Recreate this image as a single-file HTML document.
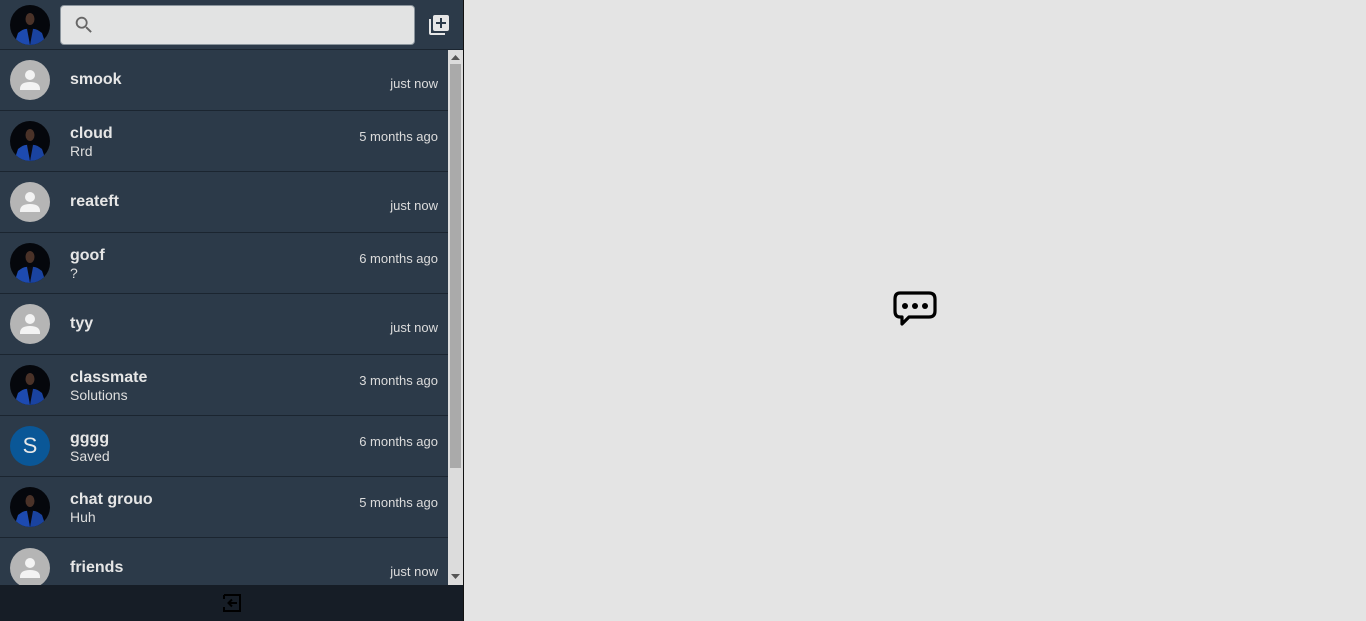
<!DOCTYPE html>
<html><head><meta charset="utf-8"><style>
*{margin:0;padding:0;box-sizing:border-box}
body{width:1366px;height:621px;overflow:hidden;background:#e4e4e4;font-family:"Liberation Sans",sans-serif;position:relative}
.side{position:absolute;left:0;top:0;width:464px;height:621px;background:#2c3a49;border-right:1px solid #111}
.hdr{position:absolute;left:0;top:0;width:463px;height:50px;border-bottom:1px solid #1b2530}
.search{position:absolute;left:60px;top:5px;width:355px;height:40px;background:#e2e3e3;border:1px solid #8a949c;border-radius:4px}
.list{position:absolute;left:0;top:50px;width:448px;height:535px;overflow:hidden}
.row{position:relative;height:61px;border-bottom:1px solid #1b2530}
.av{position:absolute;left:10px;top:10px;width:40px;height:40px;border-radius:50%;overflow:hidden}
.name{position:absolute;left:70px;font-weight:bold;font-size:16px;color:#e6e6e6}
.sub{position:absolute;left:70px;top:32px;font-size:14px;color:#dedede}
.time{position:absolute;right:10px;font-size:13px;color:#dcdcdc}
.sb{position:absolute;left:448px;top:50px;width:15px;height:535px;background:#dcdcdc}
.thumb{position:absolute;left:2px;top:14px;width:11px;height:404px;background:#aaa}
.foot{position:absolute;left:0;top:585px;width:463px;height:36px;background:#161d26}
</style></head><body>
<svg width="0" height="0" style="position:absolute"><defs>
<symbol id="ph" viewBox="0 0 40 40"><rect width="40" height="40" fill="#05070c"/><ellipse cx="20" cy="14" rx="4.5" ry="6" fill="#4a3228"/><path d="M4 40 L8 28 Q14 23 18 24 L20 40 Z" fill="#1d4ab0"/><path d="M36 40 L32 28 Q26 23 22 24 L20 40 Z" fill="#1a43a0"/><path d="M17 24 L20 40 L23 24 Z" fill="#0a0a10"/></symbol>
<symbol id="df" viewBox="0 0 40 40"><rect width="40" height="40" fill="#b5b5b5"/><circle cx="20" cy="15" r="5" fill="#f3f3f3"/><path d="M10 29 Q10 22 20 22 Q30 22 30 29 L30 30 L10 30 Z" fill="#f3f3f3"/></symbol>
</defs></svg>
<div class="side">
<div class="hdr">
<div class="av" style="top:5px"><svg width="40" height="40"><use href="#ph"/></svg></div>
<div class="search"><svg style="position:absolute;left:12px;top:8px" width="22" height="22" viewBox="0 0 24 24"><path d="M15.5 14h-.8l-.3-.3A6.5 6.5 0 1 0 9.5 16a6.5 6.5 0 0 0 4.2-1.6l.3.3v.8l5 5 1.5-1.5-5-5zm-6 0A4.5 4.5 0 1 1 14 9.5 4.5 4.5 0 0 1 9.5 14z" fill="#666"/></svg></div>
<svg style="position:absolute;left:427px;top:13px" width="24" height="24" viewBox="0 0 24 24"><path d="M4 6H2v14a2 2 0 0 0 2 2h14v-2H4V6zm16-4H8a2 2 0 0 0-2 2v12a2 2 0 0 0 2 2h12a2 2 0 0 0 2-2V4a2 2 0 0 0-2-2zm-1 9h-4v4h-2v-4H9V9h4V5h2v4h4v2z" fill="#e6e6e6"/></svg>
</div>
<div class="list">
<div class="row"><div class="av"><svg width="40" height="40"><use href="#df"/></svg></div><div class="name" style="top:21px">smook</div><div class="time" style="top:26px">just now</div></div>
<div class="row"><div class="av"><svg width="40" height="40"><use href="#ph"/></svg></div><div class="name" style="top:14px">cloud</div><div class="sub">Rrd</div><div class="time" style="top:18px">5 months ago</div></div>
<div class="row"><div class="av"><svg width="40" height="40"><use href="#df"/></svg></div><div class="name" style="top:21px">reateft</div><div class="time" style="top:26px">just now</div></div>
<div class="row"><div class="av"><svg width="40" height="40"><use href="#ph"/></svg></div><div class="name" style="top:14px">goof</div><div class="sub">?</div><div class="time" style="top:18px">6 months ago</div></div>
<div class="row"><div class="av"><svg width="40" height="40"><use href="#df"/></svg></div><div class="name" style="top:21px">tyy</div><div class="time" style="top:26px">just now</div></div>
<div class="row"><div class="av"><svg width="40" height="40"><use href="#ph"/></svg></div><div class="name" style="top:14px">classmate</div><div class="sub">Solutions</div><div class="time" style="top:18px">3 months ago</div></div>
<div class="row"><div class="av" style="background:#0a5797;color:#e8e8e8;font-size:22px;text-align:center;line-height:40px">S</div><div class="name" style="top:14px">gggg</div><div class="sub">Saved</div><div class="time" style="top:18px">6 months ago</div></div>
<div class="row"><div class="av"><svg width="40" height="40"><use href="#ph"/></svg></div><div class="name" style="top:14px">chat grouo</div><div class="sub">Huh</div><div class="time" style="top:18px">5 months ago</div></div>
<div class="row"><div class="av"><svg width="40" height="40"><use href="#df"/></svg></div><div class="name" style="top:21px">friends</div><div class="time" style="top:26px">just now</div></div>
</div>
<div class="sb"><div class="thumb"></div>
<svg style="position:absolute;left:3px;top:5px" width="9" height="5"><path d="M0 5 L4.5 0 L9 5Z" fill="#555"/></svg>
<svg style="position:absolute;left:3px;top:524px" width="9" height="5"><path d="M0 0 L4.5 5 L9 0Z" fill="#555"/></svg></div>
<div class="foot"><svg style="position:absolute;left:221px;top:8px" width="22" height="20" viewBox="0 0 22 20"><path d="M3 2 H19 V18 H3 V14 M3 6 V2" stroke="#000" stroke-width="2" fill="none"/><path d="M16 10 H8 M11 6.5 L7.5 10 L11 13.5" stroke="#000" stroke-width="2" fill="none"/></svg></div>
</div>
<svg style="position:absolute;left:893px;top:291px" width="44" height="40" viewBox="0 0 44 40"><path d="M7 2 H36 Q42 2 42 8 V20 Q42 26 36 26 H16 L9 33 V26 H7 Q2 26 2 20 V8 Q2 2 7 2Z" fill="#e4e4e4" stroke="#000" stroke-width="3.2" stroke-linejoin="round"/><circle cx="12" cy="15" r="3"/><circle cx="22" cy="15" r="3"/><circle cx="32" cy="15" r="3"/></svg>
</body></html>
